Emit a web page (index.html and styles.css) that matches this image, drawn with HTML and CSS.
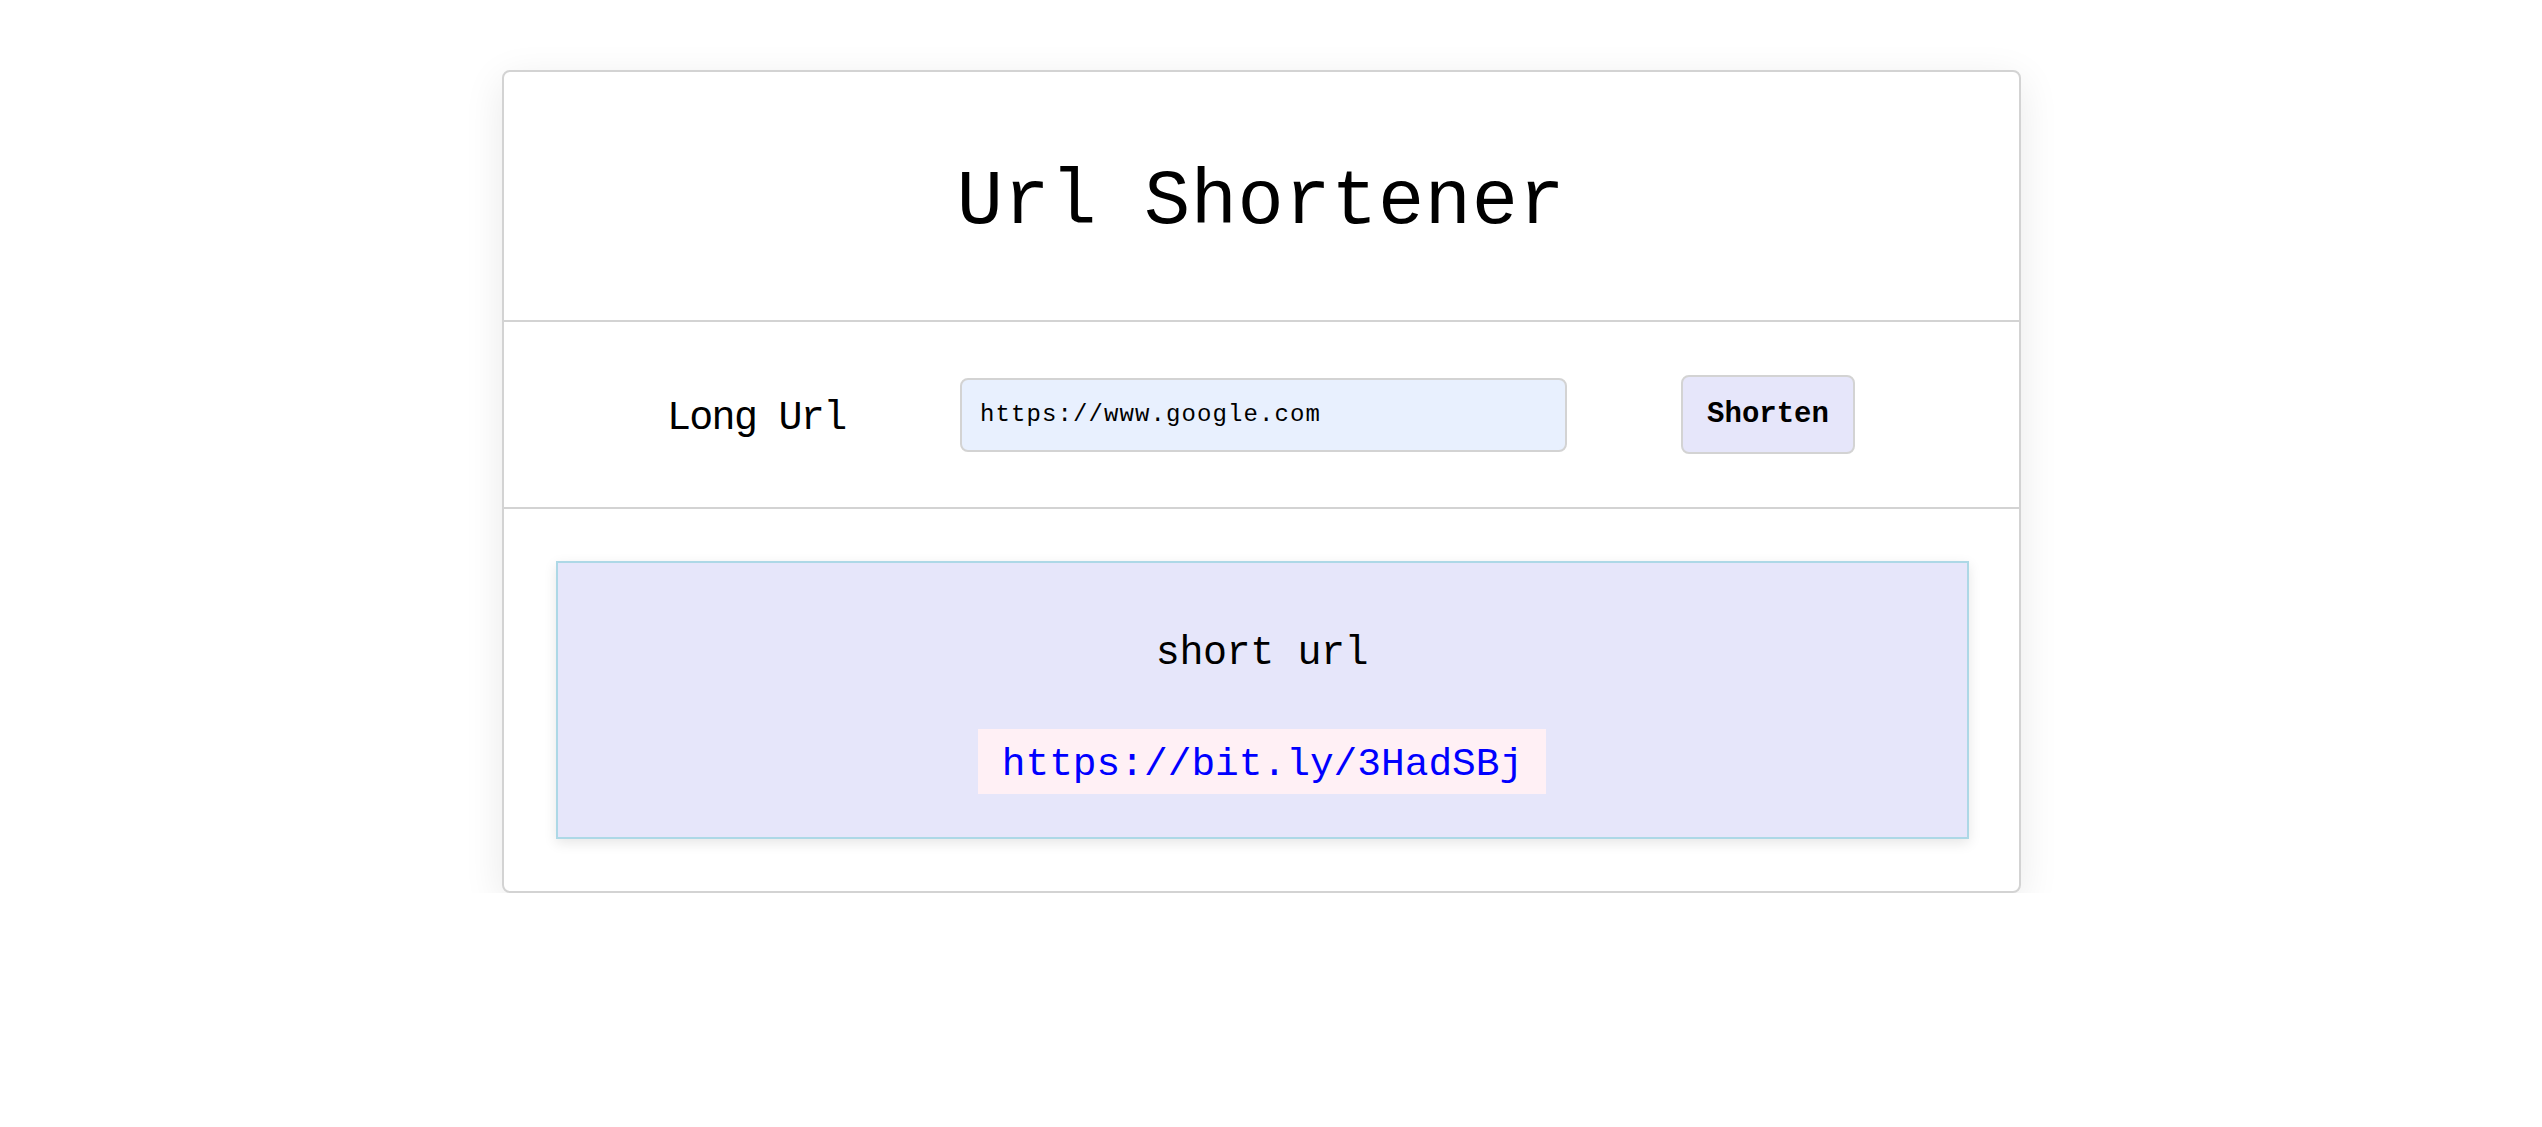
FILE: index.html
```html
<!DOCTYPE html>
<html lang="en">
<head>
<meta charset="utf-8">
<title>Url Shortener</title>
<link rel="stylesheet" href="styles.css">
</head>
<body>
<div class="page">
  <main class="card">
    <header class="card-header">
      <h1 class="title">Url Shortener</h1>
    </header>
    <section class="form-row">
      <label class="field-label" for="long-url">Long Url</label>
      <input class="url-input" id="long-url" type="text" value="https://www.google.com">
      <button class="shorten-btn" type="button">Shorten</button>
    </section>
    <section class="result-section">
      <div class="result-box">
        <p class="result-label">short url</p>
        <a class="result-link" href="#">https://bit.ly/3HadSBj</a>
      </div>
    </section>
  </main>
</div>
</body>
</html>
```

FILE: styles.css
```css
* {
  box-sizing: border-box;
}

html, body {
  margin: 0;
  padding: 0;
  background: #ffffff;
}

body {
  font-family: "Liberation Mono", "DejaVu Sans Mono", monospace;
  color: #000;
}

.page {
  display: flex;
  justify-content: center;
  padding: 70px 20px 0 0;
}

.card {
  width: 1519px;
  border: 2px solid #d3d3d3;
  border-radius: 8px;
  background: #fff;
  box-shadow: 0 10px 40px rgba(0, 0, 0, 0.09);
}

.card-header {
  height: 250px;
  padding-top: 87px;
  border-bottom: 2px solid #d3d3d3;
  text-align: center;
}

.title {
  margin: 0;
  font-size: 77px;
  line-height: 87px;
  font-weight: 400;
  letter-spacing: 0.6px;
}

.form-row {
  display: flex;
  align-items: center;
  justify-content: center;
  padding: 53px 0;
  border-bottom: 2px solid #d3d3d3;
}

.field-label {
  flex: 0 0 auto;
  width: 180px;
  white-space: nowrap;
  padding-top: 8px;
  font-size: 40px;
  line-height: 45px;
  letter-spacing: -1.7px;
  margin-right: 113px;
}

.url-input {
  flex: 0 0 auto;
  width: 607px;
  height: 74px;
  border: 2px solid #d3d3d3;
  border-radius: 8px;
  background: #e8f0fe;
  padding: 0 18px;
  font-family: "Liberation Mono", "DejaVu Sans Mono", monospace;
  font-size: 24px;
  letter-spacing: 1.1px;
  color: #000;
  outline: none;
  margin-right: 114px;
}

.shorten-btn {
  flex: 0 0 auto;
  width: 174px;
  height: 79px;
  border: 2px solid #d3d3d3;
  border-radius: 8px;
  background: #e6e6fa;
  padding: 0;
  font-family: "Liberation Mono", "DejaVu Sans Mono", monospace;
  font-size: 29px;
  font-weight: 700;
  color: #000;
  cursor: pointer;
}

.result-section {
  padding: 52px 50px 52px 52px;
}

.result-box {
  height: 278px;
  border: 2px solid #add8e6;
  background: #e6e6fa;
  box-shadow: 0 4px 12px rgba(0, 0, 0, 0.1);
  padding-top: 68px;
  text-align: center;
}

.result-label {
  margin: 0 0 53px;
  font-size: 40px;
  line-height: 45px;
  letter-spacing: -0.4px;
}

.result-link {
  display: inline-block;
  background: #fff0f5;
  color: #0000ff;
  text-decoration: none;
  font-size: 39.5px;
  line-height: 43px;
  padding: 14px 23px 8px 24px;
}
```
